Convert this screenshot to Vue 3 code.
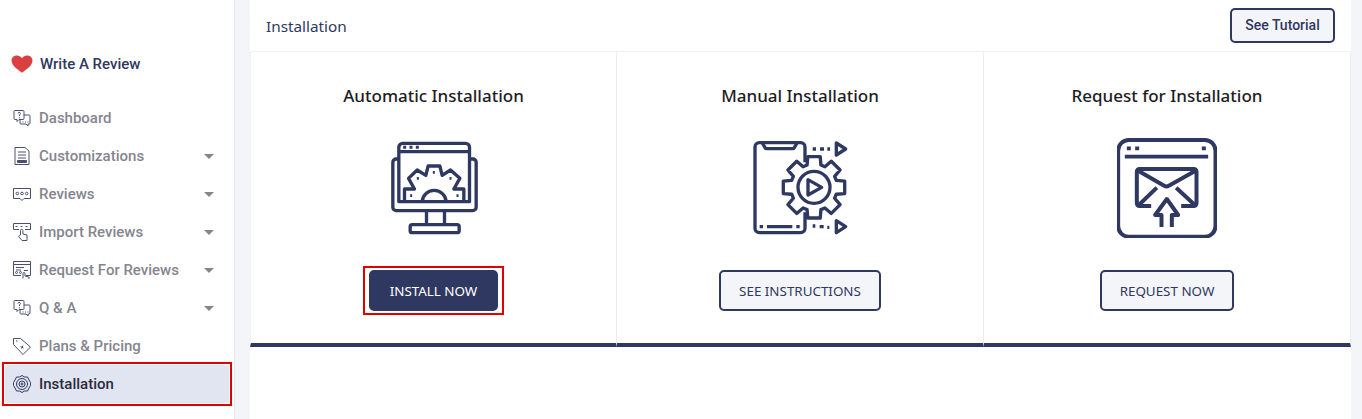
<template>
  <div class="page">
    <aside class="sidebar">
      <a class="write-review">
        <svg class="heart" width="22" height="18" viewBox="0 0 22 18">
          <path d="M11 17.800C6.500 14.300 0.500 10.800 0.500 5.600 0.500 2.700 2.800 0.500 5.800 0.500 8 0.500 9.800 1.500 11 3.200 12.200 1.500 14 0.500 16.200 0.500 19.200 0.500 21.500 2.700 21.500 5.600 21.500 10.800 15.500 14.300 11 17.800Z" fill="#db4040" />
        </svg>
        <span>Write A Review</span>
      </a>
      <nav class="menu">
        <div v-for="item in menu" :key="item.label" class="menu-wrap" :class="{ marked: item.active }">
          <a class="menu-item" :class="{ active: item.active }">
            <svg class="menu-icon" width="20" height="20" viewBox="0 0 20 20" fill="none" stroke="#4a5170" stroke-width="1">
              <path v-for="d in icons[item.icon]" :key="d" :d="d" />
              <path v-if="item.icon === 'doc'" d="M5.500 14.500H14.500V16.500H5.500Z" fill="#4a5170" />
            </svg>
            <span class="menu-label">{{ item.label }}</span>
            <i v-if="item.caret" class="caret"></i>
          </a>
        </div>
      </nav>
    </aside>

    <main class="content">
      <header class="top">
        <h1>Installation</h1>
        <button class="tutorial">See Tutorial</button>
      </header>
      <section class="cards">
        <div class="card">
          <h2>Automatic Installation</h2>
          <svg class="big-icon" width="100" height="100" viewBox="40.5 39 300 300" fill="none" stroke="#2f3860" stroke-width="10" stroke-linejoin="round">
            <path d="M85 102H77a10 10 0 0 0-10 10V247a10 10 0 0 0 10 10H307a10 10 0 0 0 10-10V112a10 10 0 0 0-10-10H297" />
            <path d="M85 230V67a12 12 0 0 1 12-12H285a12 12 0 0 1 12 12V230H85Z" />
            <path d="M85 80H297" />
            <path d="M98 67h9M117 67h9M136 67h9" stroke-width="9" />
            <path d="M102 230V192H132L114 160 140 135 166 151 173 123H208L215 151 240 135 268 160 250 192H280V230" />
            <path d="M155 232a36 36 0 0 1 72 0" />
            <path d="M139 160h6M237 160h6M119 212h6M258 212h6M187 142h6" stroke-width="8" />
            <path d="M168 258V298M222 258V298" />
            <rect x="119" y="299" width="147" height="24" rx="6" />
          </svg>
          <span class="callout"><button class="action primary">INSTALL NOW</button></span>
        </div>
        <div class="card">
          <h2>Manual Installation</h2>
          <svg class="big-icon" width="100" height="100" viewBox="45 39 300 300" fill="none" stroke="#2f3860" stroke-width="10" stroke-linejoin="round">
            <path d="M210 112V66a13 13 0 0 0-13-13H73a13 13 0 0 0-13 13V310a13 13 0 0 0 13 13H197a13 13 0 0 0 13-13V262" />
            <path d="M82 54L90 68a5 5 0 0 0 4 3H174a5 5 0 0 0 4-3L186 54" />
            <path d="M74 305h10M96 305H172M184 305h10" />
            <path d="M233 72h10M255 72h12M277 72h8M233 303h8M254 305h12M277 307h6" />
            <path d="M304 54L332 72 304 90Z" />
            <path d="M304 287L332 305 304 323Z" />
            <path :d="gear" />
            <circle cx="237" cy="187" r="48" />
            <path d="M219 164L260 187 219 210Z" />
          </svg>
          <button class="action">SEE INSTRUCTIONS</button>
        </div>
        <div class="card">
          <h2>Request for Installation</h2>
          <svg class="big-icon" width="100" height="100" viewBox="52.5 39 300 300" fill="none" stroke="#2f3860" stroke-width="12" stroke-linejoin="round">
            <rect x="56" y="45" width="292" height="290" rx="32" />
            <path d="M76 95H326" stroke-width="11" />
            <path d="M82 70h12M107 70h12M307 70h12" stroke-width="11" />
            <path d="M155 243H120a8 8 0 0 1-8-8V140a8 8 0 0 1 8-8H283a8 8 0 0 1 8 8V235a8 8 0 0 1-8 8H245" />
            <path d="M116 137L194 182a12 12 0 0 0 14 0L288 137" />
            <path d="M118 240L172 188M286 240L230 188" />
            <path d="M186 306V270H167L202 222 236 270H217V306" />
          </svg>
          <button class="action">REQUEST NOW</button>
        </div>
      </section>
    </main>
  </div>
</template>

<script setup>
const chat = [
  'M2 3.500a1 1 0 0 1 1-1h8a1 1 0 0 1 1 1v7a1 1 0 0 1-1 1H7l-2 2v-2H3a1 1 0 0 1-1-1Z',
  'M12 7h5a1 1 0 0 1 1 1v7a1 1 0 0 1-1 1h-1v2l-2-2H9a1 1 0 0 1-1-1v-3',
  'M6 5.500a1.200 1.200 0 1 1 1.500 1.200V8M7.500 9.300v1M10.500 14h1M13 14h1M15.500 14h1'
]

const icons = {
  chat,
  doc: [
    'M3 1.500H13L17 5V18.500H3Z',
    'M6 6H14M6 9H14M6 12H14'
  ],
  bubble: [
    'M1.500 4.500H18.500V14.500H12L10 16.500 8 14.500H1.500Z',
    'M4 9.500a1.300 1.300 0 1 0 2.600 0a1.300 1.300 0 1 0-2.600 0M8.700 9.500a1.300 1.300 0 1 0 2.600 0a1.300 1.300 0 1 0-2.600 0M13.400 9.500a1.300 1.300 0 1 0 2.600 0a1.300 1.300 0 1 0-2.600 0'
  ],
  stars: [
    'M7 7.500H1.500V1.500H18.500V7.500H13',
    'M3.500 4.500h2M8.500 4.500h2M13.500 4.500h2',
    'M8.500 13V8.500a1.200 1.200 0 0 1 2.400 0V12L15 13V18.500H10L6.500 14.500Z'
  ],
  browser: [
    'M14 15.500H18.500V1.500H1.500V15.500H9',
    'M1.500 4.500H18.500M4 7.500H12M4 10H9',
    'M3.500 12.500a1 1 0 1 0 2 0a1 1 0 1 0-2 0M7.500 12.500a1 1 0 1 0 2 0a1 1 0 1 0-2 0M12 10.500H16',
    'M11 18.500V13.500a1 1 0 0 1 2 0V16L17 17V19'
  ],
  tag: [
    'M1.500 2.500H8.500L18.500 11 11 18.500 1.500 8.500Z',
    'M4 5h1.500M8.500 10.500l3 1.500M11 9.500l-1.500 3'
  ],
  rings: [
    'M10 1.500L12.500 3 15.500 3 17 6 18.500 8.500 18.500 11.500 17 14 15.500 17 12.500 17 10 18.500 7.500 17 4.500 17 3 14 1.500 11.500 1.500 8.500 3 6 4.500 3 7.500 3Z',
    'M10 4.500a5.500 5.500 0 1 0 0 11a5.500 5.500 0 1 0 0-11Z',
    'M10 7a3 3 0 1 0 0 6a3 3 0 1 0 0-6Z',
    'M10 9a1 1 0 1 0 0 2a1 1 0 1 0 0-2Z'
  ]
}

const menu = [
  { label: 'Dashboard', icon: 'chat' },
  { label: 'Customizations', icon: 'doc', caret: true },
  { label: 'Reviews', icon: 'bubble', caret: true },
  { label: 'Import Reviews', icon: 'stars', caret: true },
  { label: 'Request For Reviews', icon: 'browser', caret: true },
  { label: 'Q & A', icon: 'chat', caret: true },
  { label: 'Plans & Pricing', icon: 'tag' },
  { label: 'Installation', icon: 'rings', active: true }
]

// 8 tooth cog for the manual installation icon
const gearPoints = () => {
  const pts = []
  for (let i = 0; i < 8; i++) {
    const a = (i * Math.PI) / 4 - Math.PI / 2
    const steps = [
      [70, -0.3],
      [94, -0.2],
      [94, 0.2],
      [70, 0.3]
    ]
    steps.forEach(([r, da]) => {
      pts.push(`${(237 + r * Math.cos(a + da)).toFixed(1)} ${(187 + r * Math.sin(a + da)).toFixed(1)}`)
    })
  }
  return pts
}
const gear = `M${gearPoints().join('L')}Z`
</script>

<style scoped>
.page {
  display: flex;
  height: 419px;
  overflow: hidden;
  background: #f4f5f9;
  font-family: Roboto, "Liberation Sans", sans-serif;
}

.sidebar {
  width: 234px;
  flex-shrink: 0;
  background: #fff;
  border-right: 1px solid #e8e9ee;
  padding-top: 54px;
  box-sizing: content-box;
}

.write-review {
  display: flex;
  align-items: center;
  gap: 7px;
  height: 20px;
  padding-left: 11px;
  font-size: 15px;
  font-weight: 500;
  color: #2f3860;
}

.menu {
  margin-top: 25px;
  padding: 0 5px;
}

.menu-wrap {
  height: 38px;
}

.menu-wrap.marked {
  outline: 2px solid #e00000;
  outline-offset: 1px;
}

.menu-item {
  display: flex;
  align-items: center;
  height: 38px;
  padding-left: 7px;
  font-size: 15px;
  font-weight: 500;
  color: #85858f;
  border-radius: 3px;
}

.menu-item.active {
  background: #e1e5f1;
  color: #2b2b3c;
}

.menu-icon {
  flex-shrink: 0;
  margin-right: 7px;
}

.menu-item.active .menu-icon {
  stroke: #2f3860;
}

.menu-label {
  flex: 1;
}

.caret {
  width: 0;
  height: 0;
  margin-right: 15px;
  border-left: 5px solid transparent;
  border-right: 5px solid transparent;
  border-top: 5px solid #85858f;
}

.content {
  width: 1101px;
  margin-left: 15px;
  background: #fff;
  font-family: "Noto Sans", "Open Sans", sans-serif;
}

.top {
  display: flex;
  align-items: center;
  justify-content: space-between;
  height: 51px;
  padding: 0 16px;
  border-bottom: 1px solid #f0f1f4;
}

.top h1 {
  margin: 0;
  font-size: 15.3px;
  font-weight: 400;
  color: #2f3860;
}

.tutorial {
  width: 105px;
  height: 35px;
  margin-top: -1px;
  background: #f4f5f9;
  border: 2px solid #2f3860;
  border-radius: 5px;
  font-family: Roboto, sans-serif;
  font-size: 14px;
  font-weight: 500;
  color: #2f3860;
}

.cards {
  display: grid;
  grid-template-columns: repeat(3, 367px);
}

.card {
  display: flex;
  flex-direction: column;
  align-items: center;
  box-sizing: border-box;
  height: 295px;
  padding-top: 32px;
  border-right: 1px solid #ecedf0;
  border-bottom: 4px solid #2f3860;
}

.card:first-child {
  border-left: 1px solid #f0f1f4;
}

.card h2 {
  margin: 0;
  height: 24px;
  line-height: 24px;
  font-size: 17px;
  font-weight: 500;
  color: #1d1d24;
}

.big-icon {
  margin-top: 30px;
}

.callout {
  display: flex;
  margin-top: 28px;
  padding: 2px 4px;
  border: 2px solid #e00000;
}

.action {
  height: 41px;
  margin-top: 32px;
  padding: 0 18px;
  background: #f4f5f9;
  border: 2px solid #2f3860;
  border-radius: 5px;
  font-family: "Noto Sans", "Open Sans", sans-serif;
  font-size: 13.4px;
  color: #2f3860;
}

.action.primary {
  width: 129px;
  margin-top: 0;
  padding: 0;
  background: #2f3860;
  color: #fff;
}
</style>
